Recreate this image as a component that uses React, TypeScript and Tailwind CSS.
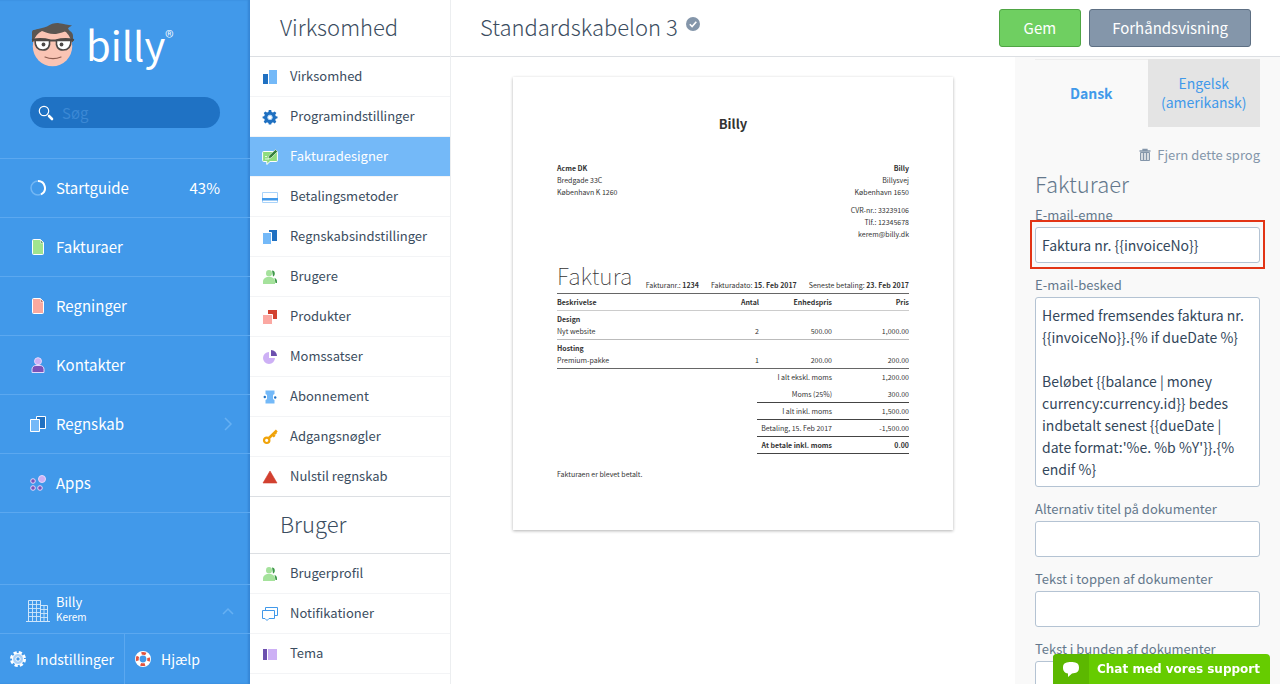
import type { ReactNode } from "react";

type NavItem = {
  label: string;
  icon: ReactNode;
  active?: boolean;
};

type MenuItem = {
  label: string;
  icon: ReactNode;
  value?: string;
  expandable?: boolean;
};

function Icon({ children }: { children: ReactNode }) {
  return (
    <svg className="size-4 shrink-0" viewBox="0 0 16 16" fill="none">
      {children}
    </svg>
  );
}

function DocumentIcon({ fill, fold }: { fill: string; fold: string }) {
  return (
    <Icon>
      <path d="M3.5.5h7l3 3v11a1 1 0 0 1-1 1h-9a1 1 0 0 1-1-1v-13a1 1 0 0 1 1-1z" fill={fill} stroke="#fff" />
      <path d="M10.5 1v3h3z" fill={fold} stroke="#fff" strokeWidth=".6" />
    </Icon>
  );
}

const PEOPLE_ICON = (
  <Icon>
    <path d="M10 1.5c1.800 0 2.800 1.200 2.800 3s-.8 2.800-1.800 3zM12.500 8.800c1.600.7 2.500 2 2.500 3.700V14h-1.500z" fill="#3f9a4a" />
    <ellipse cx="7" cy="4.300" rx="3" ry="3.300" fill="#a5e29c" />
    <path d="M1 15v-2.500c0-2.200 1.500-3.600 4-4.500h4c2.500.9 4 2.300 4 4.500V15z" fill="#a5e29c" />
  </Icon>
);

const COMPANY_MENU: NavItem[] = [
  {
    label: "Virksomhed",
    icon: (
      <Icon>
        <path d="M1 5h5v10H1z" fill="#1f70c1" />
        <path d="M7 1h8v14H7z" fill="#74b9f8" />
      </Icon>
    ),
  },
  {
    label: "Programindstillinger",
    icon: (
      <Icon>
        <path
          d="M6.800 1h2.400l.4 2 1.400.6 1.700-1.200 1.700 1.700L13.200 5.800l.6 1.400 1.700.4v1.600l-1.700.5-.6 1.400 1.100 1.600-1.700 1.700-1.600-1.100-1.400.6-.4 1.700H6.800l-.4-1.700-1.400-.6-1.600 1.100-1.700-1.700 1.100-1.600-.6-1.400L.6 9.200V7.600l1.600-.4.6-1.400-1.100-1.700 1.700-1.700L5 3.600 6.400 3z"
          fill="#1f70c1"
        />
        <circle cx="8" cy="8.400" r="2.300" fill="#fff" stroke="#a9d3fa" />
      </Icon>
    ),
  },
  {
    label: "Fakturadesigner",
    active: true,
    icon: (
      <Icon>
        <path d="M.6 3.500a1 1 0 0 1 1-1h12.800a1 1 0 0 1 1 1v8a1 1 0 0 1-1 1H8l-3.200 3v-3H1.600a1 1 0 0 1-1-1z" fill="#8fdc7e" stroke="#fff" />
        <path d="M6 9.600l1-3L13.500.6l2 2L9 9z" fill="#35803f" stroke="#fff" strokeWidth=".6" />
        <path d="M3 10h4M3 7.500h2" stroke="#e6f9e2" />
      </Icon>
    ),
  },
  {
    label: "Betalingsmetoder",
    icon: (
      <Icon>
        <path d="M.5 3.500h15v10H.5z" fill="#fff" stroke="#a9d3fa" />
        <path d="M0 9h16v2.500H0z" fill="#4199ea" />
      </Icon>
    ),
  },
  {
    label: "Regnskabsindstillinger",
    icon: (
      <Icon>
        <path d="M7 1h8v11H7z" fill="#1f70c1" />
        <path d="M.5 3.500h9v12h-9z" fill="#74b9f8" stroke="#fff" />
      </Icon>
    ),
  },
  { label: "Brugere", icon: PEOPLE_ICON },
  {
    label: "Produkter",
    icon: (
      <Icon>
        <path d="M6 1h9v9H6z" fill="#d2402f" />
        <path d="M.5 5.500h10v10H.5z" fill="#fba8a2" stroke="#fff" />
      </Icon>
    ),
  },
  {
    label: "Momssatser",
    icon: (
      <Icon>
        <path d="M7 3v6h6a6 6 0 1 1-6-6z" fill="#cdb0f5" />
        <path d="M9 1a6 6 0 0 1 6 6H9z" fill="#6c4fae" />
      </Icon>
    ),
  },
  {
    label: "Abonnement",
    icon: (
      <Icon>
        <path d="M3.500 1.500h9V5a3 3 0 0 0-2 3 3 3 0 0 0 2 3v3.500h-9V11a3 3 0 0 0 2-3 3 3 0 0 0-2-3z" fill="#74b9f8" />
        <path d="M5 4.500h6v7H5z" fill="#74b9f8" />
        <circle cx="2.800" cy="8" r="1.200" fill="#1f70c1" />
        <circle cx="13.200" cy="8.500" r="1.200" fill="#1f70c1" />
      </Icon>
    ),
  },
  {
    label: "Adgangsnøgler",
    icon: (
      <Icon>
        <circle cx="4.700" cy="11.300" r="2.700" stroke="#f0a30a" strokeWidth="2.200" />
        <path d="M6.500 9.500L14.800 1.500M10.500 5.500l2.200 2.200M12.800 3.500l1.400 1.400" stroke="#f0a30a" strokeWidth="2.600" />
      </Icon>
    ),
  },
  {
    label: "Nulstil regnskab",
    icon: (
      <Icon>
        <path d="M8 2l7 12H1z" fill="#d2402f" stroke="#d2402f" strokeWidth=".6" strokeLinejoin="round" />
      </Icon>
    ),
  },
];

const USER_MENU: NavItem[] = [
  { label: "Brugerprofil", icon: PEOPLE_ICON },
  {
    label: "Notifikationer",
    icon: (
      <Icon>
        <path d="M3.500 4V1.500h12v8H13" stroke="#4199ea" />
        <path d="M.5 4.500h12v8H7l-2 2-2-2H.5z" fill="#fff" stroke="#4199ea" />
      </Icon>
    ),
  },
  {
    label: "Tema",
    icon: (
      <Icon>
        <path d="M1 3h4v11H1z" fill="#6c4fae" />
        <path d="M6 3h9v11H6z" fill="#cdb0f5" />
      </Icon>
    ),
  },
];

const MAIN_MENU: MenuItem[] = [
  {
    label: "Startguide",
    value: "43%",
    icon: (
      <Icon>
        <circle cx="8" cy="8" r="7" stroke="#73b7f4" strokeWidth="1.500" />
        <path d="M8 1a7 7 0 0 1 3 13.300" stroke="#fff" strokeWidth="2" />
      </Icon>
    ),
  },
  { label: "Fakturaer", icon: <DocumentIcon fill="#a0e48f" fold="#35803f" /> },
  { label: "Regninger", icon: <DocumentIcon fill="#f9a99f" fold="#a3392f" /> },
  {
    label: "Kontakter",
    icon: (
      <Icon>
        <path d="M2 15.500v-3c0-2.500 1.500-4 4-4h4c2.500 0 4 1.500 4 4v3z" fill="#7b52b8" stroke="#e6d9fb" />
        <circle cx="8" cy="4.200" r="3.500" fill="#cdb0f5" stroke="#e6d9fb" />
      </Icon>
    ),
  },
  {
    label: "Regnskab",
    expandable: true,
    icon: (
      <Icon>
        <path d="M6.500.5h9v12h-9z" fill="#1f70c1" stroke="#fff" />
        <path d="M.5 3.500h9v12h-9z" fill="#74b9f8" stroke="#fff" />
      </Icon>
    ),
  },
  {
    label: "Apps",
    icon: (
      <Icon>
        <circle cx="3" cy="6" r="2.300" fill="#7b52b8" stroke="#e6d9fb" />
        <circle cx="3" cy="13" r="2.300" fill="#7b52b8" stroke="#e6d9fb" />
        <circle cx="10" cy="13" r="2.300" fill="#7b52b8" stroke="#e6d9fb" />
        <circle cx="12" cy="4" r="3.500" fill="#cdb0f5" stroke="#e6d9fb" />
      </Icon>
    ),
  },
];

const INVOICE_LINES = [
  { product: "Design", text: "Nyt website", quantity: "2", unitPrice: "500.00", price: "1,000.00" },
  { product: "Hosting", text: "Premium-pakke", quantity: "1", unitPrice: "200.00", price: "200.00" },
];

const EMAIL_MESSAGE = `Hermed fremsendes faktura nr. {{invoiceNo}}.{% if dueDate %}

Beløbet {{balance | money currency:currency.id}} bedes indbetalt senest {{dueDate | date format:'%e. %b %Y'}}.{% endif %}`;

function Logo() {
  return (
    <a href="#" className="flex h-[54px] items-start gap-2.5 text-white">
      <svg className="mt-[3px] h-12 w-[46px]" viewBox="0 0 46 48" fill="none">
        <path d="M2 19V9.500c0-2 1-2.500 2-2.500l4-1h28l4 2c2 1 3 3 3 5v6z" fill="#5b5652" />
        <circle cx="22.500" cy="23.500" r="19.700" fill="#fac4b4" />
        <path d="M3 18c0-4 .5-8 2-10.500C9 5 13 5 17 3.500 21 1 25-.2 29 .2c5 .5 9 1.800 13 2.300-1.500 1-3 1.500-4 3l2 3c-5-1-9 2-14 2.500-6 .5-10-1.500-14-3-4 2-7 5-9 10z" fill="#5b5652" />
        <path d="M2 17c7-1.500 13-1 18.500.5h5C31 16 37 15.500 44 17" stroke="#4c4846" strokeWidth="2" />
        <path d="M5 17.500h14.500c.8 6-1.500 9.500-6.500 9.500-6 0-8-3.500-8-9.500zM26.500 17.500H41c0 6-2 9.500-8 9.500-5 0-7.300-3.500-6.500-9.500z" fill="#fff" stroke="#4c4846" strokeWidth="1.600" />
        <circle cx="13.500" cy="21.500" r="1.900" fill="#4c4846" />
        <circle cx="31.500" cy="21.500" r="1.900" fill="#4c4846" />
        <path d="M15 34c5 2 11 2 16 0" stroke="#8d5b4e" strokeWidth="1.200" strokeLinecap="round" />
      </svg>
      <span className="flex items-start">
        <span className="text-[40px] leading-[48px]">billy</span>
        <span className="mt-2 text-lg leading-4 font-light">®</span>
      </span>
    </a>
  );
}

function Sidebar() {
  return (
    <aside className="flex w-[250px] shrink-0 flex-col bg-[#4199ea] text-white shadow-[inset_-2px_0_2px_rgba(20,80,150,0.25)]">
      <div className="flex flex-col gap-[23px] px-[30px] pt-5 pb-[30px]">
        <Logo />
        <div className="flex h-[31px] items-center gap-2 rounded-full bg-[#1f72c4] px-2">
          <svg className="size-4 shrink-0" viewBox="0 0 16 16" fill="none">
            <circle cx="6" cy="6" r="4.700" stroke="#fff" strokeWidth="1.200" />
            <path d="M11 11l3 3" stroke="#fff" strokeWidth="2.600" strokeLinecap="round" />
          </svg>
          <input
            type="text"
            aria-label="Søg"
            placeholder="Søg"
            className="h-full w-full min-w-0 bg-transparent text-[15px] outline-none placeholder:text-[#3b88d4]"
          />
        </div>
      </div>
      <nav className="border-b border-[#5ba8f0]">
        {MAIN_MENU.map((item) => (
          <a
            key={item.label}
            href="#"
            className="flex h-[59px] items-center gap-2.5 border-t border-[#5ba8f0] px-[30px] text-[15px]"
          >
            {item.icon}
            <span className="grow">{item.label}</span>
            {item.value ? <span>{item.value}</span> : null}
            {item.expandable ? (
              <svg className="-mr-4 size-4" viewBox="0 0 16 16" fill="none">
                <path d="M5 2l6 6-6 6" stroke="#66b0f3" strokeWidth="1.500" />
              </svg>
            ) : null}
          </a>
        ))}
      </nav>
      <div className="mt-auto">
        <button
          type="button"
          className="flex h-[49px] w-full items-center gap-1.5 border-t border-[#5ba8f0] pr-3.5 pl-[26px] text-left"
        >
          <svg className="mt-1 h-[22px] w-6" viewBox="0 0 24 22" fill="none" stroke="#cfe6fb">
            <path d="M0 21.500h24M2.500 21V.5h12V21M14.500 5.500h7V21" />
            <path
              d="M6.500 1v20M10.500 1v20M2.500 4.500h12M2.500 8.500h12M2.500 12.500h12M2.500 16.500h12M18 6v15M15 9.500h7M15 13.500h7M15 17.500h7"
              strokeWidth=".9"
            />
          </svg>
          <span className="grow">
            <span className="block text-[13px] leading-4">Billy</span>
            <span className="block text-[10px] leading-[14px]">Kerem</span>
          </span>
          <svg className="mt-1 size-4" viewBox="0 0 16 16" fill="none">
            <path d="M3 11l5-5 5 5" stroke="#66b0f3" strokeWidth="1.500" />
          </svg>
        </button>
        <div className="flex border-t border-[#5ba8f0] text-sm">
          <a href="#" className="flex h-[50px] w-[125px] items-center gap-2.5 border-r border-[#5ba8f0] pl-2.5">
            <Icon>
              <circle cx="8" cy="8" r="6.500" stroke="#fff" strokeWidth="3" strokeDasharray="3.100 2" />
              <circle cx="8" cy="8" r="5.500" fill="#a9d0f7" stroke="#fff" />
              <circle cx="8" cy="8" r="2.200" fill="#4199ea" stroke="#fff" />
            </Icon>
            Indstillinger
          </a>
          <a href="#" className="flex h-[50px] items-center gap-2.5 pl-2.5">
            <Icon>
              <circle cx="8" cy="8" r="5.700" stroke="#fff" strokeWidth="4.600" />
              <circle
                cx="8"
                cy="8"
                r="5.700"
                stroke="#e2543f"
                strokeWidth="2.800"
                strokeDasharray="4.477 4.477"
                strokeDashoffset="2.238"
              />
            </Icon>
            Hjælp
          </a>
        </div>
      </div>
    </aside>
  );
}

function NavSection({ title, items }: { title: string; items: NavItem[] }) {
  return (
    <section>
      <h2 className="h-[57px] border-b border-[#dcdfe3] pl-[30px] text-[22px] leading-[53px] font-light">
        {title}
      </h2>
      <ul>
        {items.map((item) => (
          <li key={item.label} className="border-b border-[#f3f4f6]">
            <a
              href="#"
              className={
                item.active
                  ? "flex h-[39px] items-center gap-3 bg-[#74b9f8] pl-3 text-white"
                  : "flex h-[39px] items-center gap-3 pl-3"
              }
            >
              {item.icon}
              <span className="pb-0.5">{item.label}</span>
            </a>
          </li>
        ))}
      </ul>
    </section>
  );
}

function Invoice() {
  return (
    <article className="w-full max-w-[440px] bg-white px-11 pt-[33px] pb-[50px] text-[7px] leading-3 text-[#333] shadow-[0_1px_3px_rgba(0,0,0,0.3)]">
      <h2 className="text-center text-[13px] leading-7 font-bold">Billy</h2>
      <div className="mt-6 flex justify-between">
        <address className="not-italic">
          <b>Acme DK</b>
          <p>Bredgade 33C</p>
          <p>København K 1260</p>
        </address>
        <address className="text-right not-italic">
          <b>Billy</b>
          <p>Billysvej</p>
          <p>København 1650</p>
          <p className="mt-1.5">CVR-nr.: 33239106</p>
          <p>Tlf.: 12345678</p>
          <p>kerem@billy.dk</p>
        </address>
      </div>
      <div className="mt-[19px] flex items-end gap-3 border-b border-[#666] pb-0.5">
        <h3 className="mr-auto text-[23px] leading-8 font-thin">Faktura</h3>
        <p>
          Fakturanr.: <b>1234</b>
        </p>
        <p>
          Fakturadato: <b>15. Feb 2017</b>
        </p>
        <p>
          Seneste betaling: <b>23. Feb 2017</b>
        </p>
      </div>
      <table className="w-full table-fixed">
        <thead>
          <tr className="border-b border-[#ccc] text-right">
            <th className="h-4 text-left">Beskrivelse</th>
            <th className="w-10">Antal</th>
            <th className="w-[73px]">Enhedspris</th>
            <th className="w-[77px]">Pris</th>
          </tr>
        </thead>
        <tbody>
          {INVOICE_LINES.map((line) => (
            <tr key={line.product} className="border-b border-[#bbb] text-right align-bottom last:border-[#666]">
              <td className="py-0.5 text-left">
                <b className="block">{line.product}</b>
                {line.text}
              </td>
              <td className="py-0.5">{line.quantity}</td>
              <td className="py-0.5">{line.unitPrice}</td>
              <td className="py-0.5">{line.price}</td>
            </tr>
          ))}
        </tbody>
      </table>
      <table className="ml-auto w-[152px] table-fixed text-right">
        <tbody>
          <tr>
            <td className="h-[17px] w-[75px] whitespace-nowrap">I alt ekskl. moms</td>
            <td>1,200.00</td>
          </tr>
          <tr className="border-b border-[#444]">
            <td className="h-[17px]">Moms (25%)</td>
            <td>300.00</td>
          </tr>
          <tr className="border-b border-[#444]">
            <td className="h-[17px]">I alt inkl. moms</td>
            <td>1,500.00</td>
          </tr>
          <tr className="border-b border-[#444]">
            <td className="h-[17px] whitespace-nowrap">Betaling, 15. Feb 2017</td>
            <td>-1,500.00</td>
          </tr>
          <tr className="border-b border-[#444] font-bold">
            <td className="h-[17px] whitespace-nowrap">At betale inkl. moms</td>
            <td>0.00</td>
          </tr>
        </tbody>
      </table>
      <p className="mt-3.5">Fakturaen er blevet betalt.</p>
    </article>
  );
}

function TextField({
  id,
  label,
  value,
  highlighted,
}: {
  id: string;
  label: string;
  value?: string;
  highlighted?: boolean;
}) {
  return (
    <div className="mb-3">
      <label htmlFor={id} className="mb-0.5 block leading-5">
        {label}
      </label>
      <div className="relative">
        <input
          id={id}
          type="text"
          defaultValue={value}
          className="block h-9 w-full rounded-[3px] border border-[#b4c3d3] bg-white px-1.5 text-sm text-[#33475b]"
        />
        {highlighted ? (
          <div className="pointer-events-none absolute -inset-x-[5px] -top-[7px] -bottom-1.5 border-2 border-[#e23415]" />
        ) : null}
      </div>
    </div>
  );
}

function SettingsPanel() {
  return (
    <aside className="w-[265px] shrink-0 overflow-hidden bg-[#f9f9f9] px-5 pt-0.5 text-[13px] text-[#64788c]">
      <div role="tablist" className="flex h-[68px] text-sm leading-[19px] text-[#4199ea]">
        <button type="button" role="tab" aria-selected="true" className="flex-1 border-t border-[#ededed] font-bold">
          Dansk
        </button>
        <button type="button" role="tab" aria-selected="false" className="flex-1 bg-[#e4e4e4]">
          Engelsk (amerikansk)
        </button>
      </div>
      <button type="button" className="mt-[18px] ml-auto flex h-5 items-center gap-1 text-[#8496aa]">
        <svg className="size-4" viewBox="0 0 16 16" fill="none" stroke="currentColor">
          <path d="M3.500 5.500h9v8h-9zM6.500 6v7M9.500 6v7" />
          <path d="M2.500 4h11M6 3.500v-1h4v1" strokeWidth="1.300" />
          <path d="M5 6v7M8 6v7M11 6v7" strokeWidth=".6" />
        </svg>
        Fjern dette sprog
      </button>
      <h2 className="mt-0.5 mb-1.5 text-[22px] leading-8 font-light">Fakturaer</h2>
      <TextField id="email-subject" label="E-mail-emne" value="Faktura nr. {{invoiceNo}}" highlighted />
      <div className="mb-3">
        <label htmlFor="email-message" className="mb-0.5 block leading-5">
          E-mail-besked
        </label>
        <textarea
          id="email-message"
          defaultValue={EMAIL_MESSAGE}
          className="block h-[190px] w-full resize-none overflow-hidden rounded-[3px] border border-[#b4c3d3] bg-white px-1.5 py-1.5 text-sm leading-[22px] text-[#33475b]"
        />
      </div>
      <TextField id="alt-title" label="Alternativ titel på dokumenter" />
      <TextField id="text-top" label="Tekst i toppen af dokumenter" />
      <TextField id="text-bottom" label="Tekst i bunden af dokumenter" />
    </aside>
  );
}

export default function App() {
  return (
    <div className="flex h-screen overflow-hidden bg-white font-['Noto_Sans_CJK_SC',sans-serif] text-[#3b4d60]">
      <Sidebar />
      <nav className="w-[201px] shrink-0 overflow-hidden border-r border-[#eceef0] text-[13px]">
        <NavSection title="Virksomhed" items={COMPANY_MENU} />
        <div className="-mt-px border-t border-[#dcdfe3]">
          <NavSection title="Bruger" items={USER_MENU} />
        </div>
      </nav>
      <div className="flex min-w-0 grow flex-col">
        <header className="flex h-[57px] shrink-0 items-center gap-2 border-b border-[#dcdfe3] px-[29px]">
          <h1 className="pb-1 text-[22px] leading-8 font-light">Standardskabelon 3</h1>
          <svg className="mr-auto mb-2 size-[14px]" viewBox="0 0 14 14" fill="none">
            <circle cx="7" cy="7" r="7" fill="#8496aa" />
            <path d="M3.800 7.200l2.300 2.300 4.200-4.800" stroke="#fff" strokeWidth="1.600" />
          </svg>
          <button
            type="button"
            className="h-[38px] rounded-[3px] border border-[#4fa544] bg-[#6fcf61] px-6 text-[15px] text-white"
          >
            Gem
          </button>
          <button
            type="button"
            className="h-[38px] rounded-[3px] border border-[#5d6f83] bg-[#8496aa] px-[22px] text-[15px] text-white"
          >
            Forhåndsvisning
          </button>
        </header>
        <div className="flex min-h-0 grow">
          <main className="flex min-w-0 grow items-start justify-center p-5">
            <Invoice />
          </main>
          <SettingsPanel />
        </div>
      </div>
      <button
        type="button"
        className="fixed right-2.5 bottom-0 flex h-[30px] overflow-hidden rounded-t-[4px] bg-[#6c0] font-['DejaVu_Sans',sans-serif] text-xs leading-[30px] font-bold text-white"
      >
        <span className="flex h-full w-9 items-center justify-center bg-[#5cb800]">
          <svg className="h-[15px] w-4" viewBox="0 0 16 15">
            <path d="M8 0C12 0 16 .5 16 5.500S13 11 9 11.500L5 15v-3.500C2 11 0 9.500 0 5.500 0 .5 4 0 8 0z" fill="#fff" />
          </svg>
        </span>
        <span className="pr-2.5 pl-2">Chat med vores support</span>
      </button>
    </div>
  );
}
